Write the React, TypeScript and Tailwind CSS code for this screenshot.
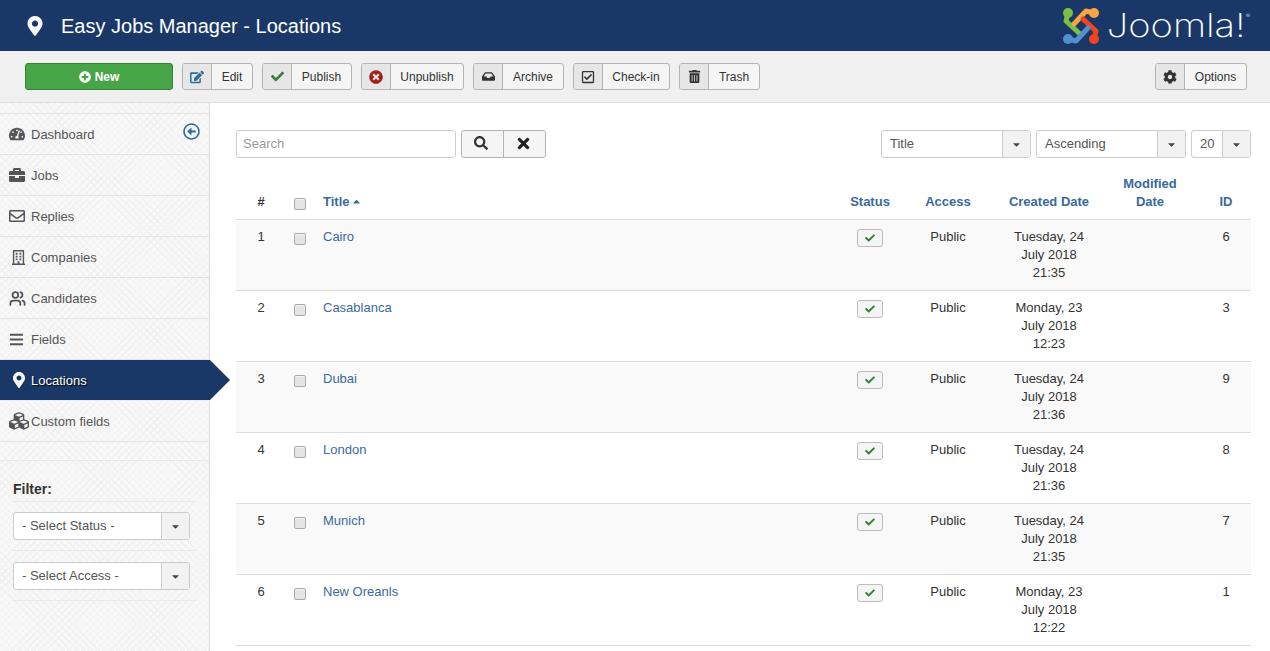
import type { ReactNode } from "react";
import { Users } from "lucide-react";
import {
  FaBars,
  FaBriefcase,
  FaCaretDown,
  FaCaretUp,
  FaCheck,
  FaCog,
  FaCubes,
  FaEdit,
  FaInbox,
  FaMapMarkerAlt,
  FaPlusCircle,
  FaRegArrowAltCircleLeft,
  FaRegBuilding,
  FaRegCheckSquare,
  FaRegEnvelope,
  FaSearch,
  FaTachometerAlt,
  FaTimes,
  FaTimesCircle,
  FaTrashAlt,
} from "react-icons/fa";

const toolbar = [
  { label: "Edit", icon: <FaEdit className="text-[14px] text-[#2f6f92]" />, width: "w-[71px]" },
  { label: "Publish", icon: <FaCheck className="text-[13px] text-[#378137]" />, width: "w-[90px]" },
  { label: "Unpublish", icon: <FaTimesCircle className="text-[14px] text-[#a51f18]" />, width: "w-[103px]" },
  { label: "Archive", icon: <FaInbox className="text-[13px] text-[#333]" />, width: "w-[91px]" },
  { label: "Check-in", icon: <FaRegCheckSquare className="text-[14px] text-[#333]" />, width: "w-[97px]" },
  { label: "Trash", icon: <FaTrashAlt className="text-[13px] text-[#333]" />, width: "w-[81px]" },
];

const nav = [
  { label: "Dashboard", icon: <FaTachometerAlt className="text-[16px]" /> },
  { label: "Jobs", icon: <FaBriefcase className="text-[16px]" /> },
  { label: "Replies", icon: <FaRegEnvelope className="text-[16px]" /> },
  { label: "Companies", icon: <FaRegBuilding className="ml-[2px] text-[15px]" /> },
  { label: "Candidates", icon: <Users size={17} strokeWidth={2.5} /> },
  { label: "Fields", icon: <FaBars className="text-[15px]" /> },
  { label: "Locations", icon: <FaMapMarkerAlt className="ml-[2px] text-[16px]" />, active: true },
  { label: "Custom fields", icon: <FaCubes className="text-[20px]" /> },
];

const rows = [
  { n: 1, title: "Cairo", date: ["Tuesday, 24", "July 2018", "21:35"], id: 6 },
  { n: 2, title: "Casablanca", date: ["Monday, 23", "July 2018", "12:23"], id: 3 },
  { n: 3, title: "Dubai", date: ["Tuesday, 24", "July 2018", "21:36"], id: 9 },
  { n: 4, title: "London", date: ["Tuesday, 24", "July 2018", "21:36"], id: 8 },
  { n: 5, title: "Munich", date: ["Tuesday, 24", "July 2018", "21:35"], id: 7 },
  { n: 6, title: "New Oreanls", date: ["Monday, 23", "July 2018", "12:22"], id: 1 },
];

function ToolbarButton({ label, icon, width }: { label: string; icon: ReactNode; width: string }) {
  return (
    <button className={`flex h-[27px] ${width} overflow-hidden rounded-[3px] border border-[#b3b3b3] bg-[#f5f5f5] text-[12px] text-[#333]`}>
      <span className="flex h-full w-[29px] shrink-0 items-center justify-center border-r border-[#b3b3b3] bg-[#e6e6e6]">{icon}</span>
      <span className="flex-1 self-center text-center">{label}</span>
    </button>
  );
}

function Select({ label, width }: { label: string; width: string }) {
  return (
    <div className={`flex h-[28px] ${width} overflow-hidden rounded-[3px] border border-[#ccc] bg-white text-[13px] text-[#555]`}>
      <span className="flex-1 self-center truncate pl-[8px]">{label}</span>
      <span className="flex w-[28px] shrink-0 items-center justify-center border-l border-[#ccc] bg-[#f2f2f2] text-[11px] text-[#444]">
        <FaCaretDown />
      </span>
    </div>
  );
}

function Checkbox() {
  return <span className="mx-auto block h-[12px] w-[12px] rounded-[2px] border border-[#aaa] bg-[#e4e4e4] shadow-[inset_0_1px_1px_#f5f5f5]" />;
}

function JoomlaLogo() {
  // same arm rotated four times around the centre
  const arms = [
    { color: "#7ac143", angle: 0 },
    { color: "#f9a541", angle: 90 },
    { color: "#f44321", angle: 180 },
    { color: "#5091cd", angle: 270 },
  ];
  return (
    <svg width="38" height="38" viewBox="0 0 38 38" fill="none" strokeLinecap="round" strokeLinejoin="round">
      {arms.map((arm) => (
        <g key={arm.color} transform={`rotate(${arm.angle} 19 19)`}>
          <circle cx="6" cy="6" r="5" fill={arm.color} />
          <path d="M6 6 L4 14 L17 26" stroke={arm.color} strokeWidth="5" />
        </g>
      ))}
    </svg>
  );
}

export default function App() {
  return (
    <div className="flex h-screen flex-col overflow-hidden bg-white font-['Liberation_Sans',Arial,sans-serif] text-[13px] text-[#333]">
      <header className="flex h-[51px] shrink-0 items-center justify-between bg-[#1a3867] pl-[25px] pr-[24px] text-white">
        <div className="flex items-center">
          <FaMapMarkerAlt className="text-[20px]" />
          <h1 className="ml-[16px] text-[20px] leading-none">Easy Jobs Manager - Locations</h1>
        </div>
        <div className="flex items-center gap-[29px]">
          <JoomlaLogo />
          <span className="relative origin-right scale-x-[1.19] font-['Inter',sans-serif] text-[32px] font-extralight leading-none">
            Joomla!
            <span className="absolute -right-[4px] top-[3px] text-[6px]">®</span>
          </span>
        </div>
      </header>

      <div className="flex h-[52px] shrink-0 items-center justify-between border-b border-[#ddd] bg-[#f0f0f0] px-[25px]">
        <div className="flex items-center gap-[9px]">
          <button className="flex h-[27px] w-[148px] items-center justify-center gap-[4px] rounded-[3px] border border-[#378137] bg-[#46a546] text-[12px] font-bold text-white">
            <FaPlusCircle className="text-[12px]" />
            New
          </button>
          {toolbar.map((item) => (
            <ToolbarButton key={item.label} {...item} />
          ))}
        </div>
        <div className="mr-[-2px]">
          <ToolbarButton label="Options" icon={<FaCog className="text-[14px] text-[#333]" />} width="w-[92px]" />
        </div>
      </div>

      <div className="flex min-h-0 flex-1">
        <aside className="w-[210px] shrink-0 border-r border-[#ddd] bg-[#f8f8f8] bg-[repeating-linear-gradient(45deg,#f1f1f1_0,#f1f1f1_1px,transparent_1px,transparent_5px),repeating-linear-gradient(-45deg,#f1f1f1_0,#f1f1f1_1px,transparent_1px,transparent_5px)] pt-[10px]">
          <nav className="border-t border-[#e3e3e3]">
            {nav.map((item) => (
              <div
                key={item.label}
                className={
                  item.active
                    ? "relative -mr-px flex h-[41px] items-center border-b border-[#f0f0f0] bg-[#1a3867] pl-[9px] text-white"
                    : "relative flex h-[41px] items-center border-b border-[#e3e3e3] pl-[9px] text-[#555]"
                }
              >
                <span className="flex w-[22px] shrink-0 justify-start">{item.icon}</span>
                <span className={`mt-[2px] text-[13px] ${item.active ? "[text-shadow:1px_1px_1px_#000]" : ""}`}>{item.label}</span>
                {item.label === "Dashboard" && (
                  <FaRegArrowAltCircleLeft className="absolute right-[9px] top-[9px] text-[17px] text-[#2a69a4]" />
                )}
                {item.active && (
                  <span className="absolute left-full top-0 h-0 w-0 border-y-[20px] border-l-[20px] border-y-transparent border-l-[#1a3867]" />
                )}
              </div>
            ))}
          </nav>

          <div className="mt-[18px] border-t border-[#e9e9e9] px-[13px] pt-[19px]">
            <div className="border-b border-[#e9e9e9] pb-[3px] text-[14px] font-bold leading-[18px] text-[#333]">Filter:</div>
            <div className="border-b border-[#e9e9e9] py-[10px]">
              <Select label="- Select Status -" width="w-[177px]" />
            </div>
            <div className="border-b border-[#e9e9e9] pb-[10px] pt-[11px]">
              <Select label="- Select Access -" width="w-[177px]" />
            </div>
          </div>
        </aside>

        <main className="min-w-0 flex-1 pl-[26px] pr-[19px] pt-[27px]">
          <div className="flex items-center justify-between">
            <div className="flex items-center">
              <div className="flex h-[28px] w-[220px] items-center rounded-[3px] border border-[#ccc] bg-white pl-[6px] text-[13px] text-[#999]">Search</div>
              <button className="ml-[5px] flex h-[28px] w-[43px] items-center justify-center rounded-l-[3px] border border-[#b3b3b3] bg-[#f5f5f5] pb-[2px] pr-[3px] text-[14px] text-[#333]">
                <FaSearch />
              </button>
              <button className="-ml-px flex h-[28px] w-[43px] items-center justify-center rounded-r-[3px] border border-[#b3b3b3] bg-[#f5f5f5] pb-[2px] pr-[2px] text-[17px] text-[#222]">
                <FaTimes />
              </button>
            </div>
            <div className="flex items-center gap-[5px]">
              <Select label="Title" width="w-[150px]" />
              <Select label="Ascending" width="w-[150px]" />
              <Select label="20" width="w-[60px]" />
            </div>
          </div>

          <table className="mt-[9px] w-full table-fixed border-collapse text-[13px] leading-[18px]">
            <colgroup>
              <col className="w-[50px]" />
              <col className="w-[28px]" />
              <col />
              <col className="w-[54px]" />
              <col className="w-[102px]" />
              <col className="w-[100px]" />
              <col className="w-[102px]" />
              <col className="w-[50px]" />
            </colgroup>
            <thead>
              <tr className="border-b border-[#ddd] font-bold text-[#3a6a9c]">
                <th className="px-2 py-2 align-bottom text-center text-[#333]">#</th>
                <th className="pb-[9px] pt-2 align-bottom">
                  <Checkbox />
                </th>
                <th className="py-2 pl-[9px] pr-2 align-bottom text-left">
                  Title <FaCaretUp className="ml-[-2px] inline align-[-1px] text-[11px]" />
                </th>
                <th className="py-2 align-bottom text-center">Status</th>
                <th className="py-2 align-bottom text-center">Access</th>
                <th className="py-2 align-bottom text-center">Created Date</th>
                <th className="py-2 align-bottom text-center">
                  Modified
                  <br />
                  Date
                </th>
                <th className="py-2 align-bottom text-center">ID</th>
              </tr>
            </thead>
            <tbody>
              {rows.map((row) => (
                <tr key={row.n} className="border-b border-[#ddd] odd:bg-[#f9f9f9]">
                  <td className="px-2 py-2 align-top text-center">{row.n}</td>
                  <td className="pt-[13px] align-top">
                    <Checkbox />
                  </td>
                  <td className="py-2 pl-[9px] pr-2 align-top text-[#3a6a9c]">{row.title}</td>
                  <td className="pt-[9px] align-top">
                    <span className="mx-auto flex h-[18px] w-[26px] items-center justify-center rounded-[3px] border border-[#bbb] bg-[#f5f5f5] text-[10px] text-[#378137]">
                      <FaCheck />
                    </span>
                  </td>
                  <td className="py-2 align-top text-center">Public</td>
                  <td className="py-2 align-top text-center">
                    {row.date.map((line) => (
                      <div key={line}>{line}</div>
                    ))}
                  </td>
                  <td className="py-2 align-top" />
                  <td className="py-2 align-top text-center">{row.id}</td>
                </tr>
              ))}
            </tbody>
          </table>
        </main>
      </div>
    </div>
  );
}
